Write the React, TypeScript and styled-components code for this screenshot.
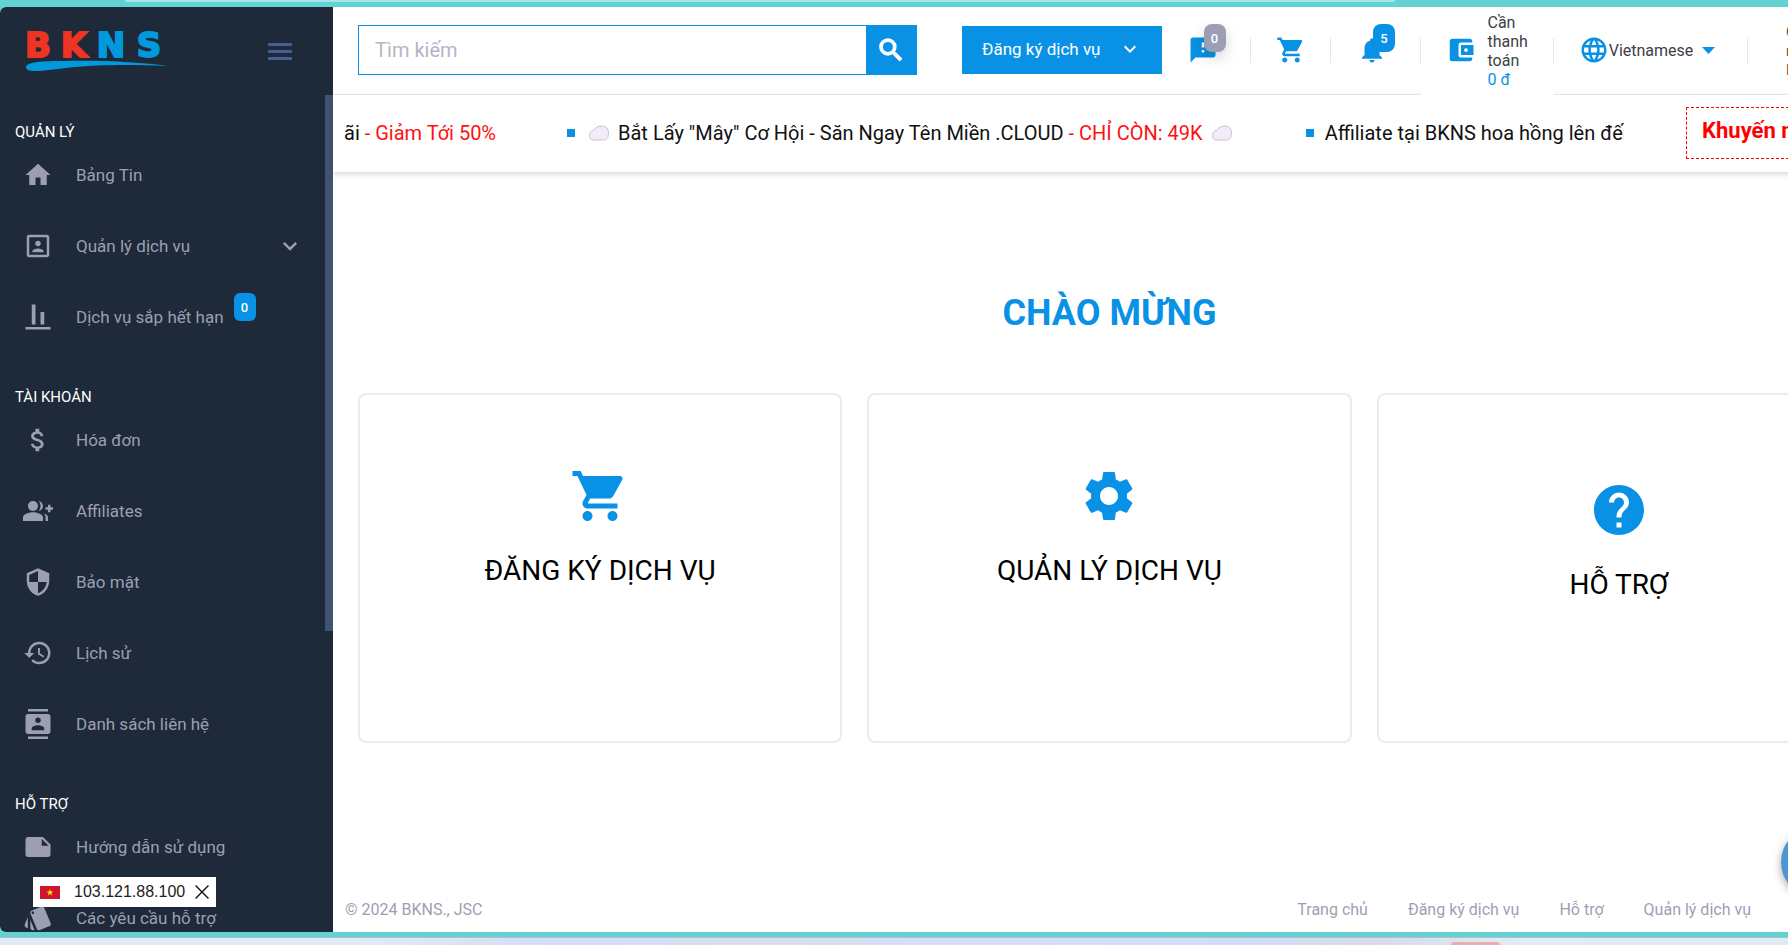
import React from "react";
import styled, { createGlobalStyle, css } from "styled-components";
import {
  MdHome,
  MdPortrait,
  MdAlignVerticalBottom,
  MdAttachMoney,
  MdGroupAdd,
  MdSecurity,
  MdHistory,
  MdContacts,
  MdNote,
  MdStyle,
  MdSearch,
  MdFeedback,
  MdShoppingCart,
  MdNotifications,
  MdAccountBalanceWallet,
  MdLanguage,
  MdSettings,
  MdHelp,
  MdExpandMore,
} from "react-icons/md";

const blue = "#0992e5";
const navy = "#1e2939";
const muted = "#9c9fb4";
const teal = "#62d2d3";
const line = "#ebebf0";

const GlobalStyle = createGlobalStyle`
  * { box-sizing: border-box; }
  body {
    margin: 0;
    overflow: hidden;
    background: ${teal};
    font-family: Roboto, "Liberation Sans", sans-serif;
    color: #212121;
  }
  a { color: inherit; text-decoration: none; }
  button, input, select { font: inherit; }
  h1, h2, p, ul { margin: 0; padding: 0; }
  ul { list-style: none; }
`;

const Desktop = styled.div`
  height: 100vh;
  display: flex;
  flex-direction: column;
  overflow: hidden;
`;

const TopEdge = styled.div`
  flex: none;
  height: 7px;
  padding: 0 22% 0 7%;
  background: ${teal};
  &::before {
    content: "";
    display: block;
    height: 2px;
    border-radius: 0 0 8px 8px;
    background: #a5e8eb;
  }
`;

const BottomEdge = styled.div`
  flex: none;
  height: 13px;
  display: flex;
  align-items: flex-end;
  padding: 0 16% 0 calc(81% + 3px);
  border-top: 5px solid ${teal};
  background: linear-gradient(90deg, #e1ebf5 0%, #e1ebf5 20%, #d3def7 30%, #dadcf2 42%, #d3dff7 60%, #d2def7 70%, #d9daea 77%, #e0ecf6 85%, #e0ebf5 100%);
  box-shadow: inset 0 1px 0 #b4bcc8;
  &::before {
    content: "";
    width: 49px;
    height: 3px;
    border-radius: 4px 4px 0 0;
    background: #ebaead;
  }
`;

/* The application is wider than the window; its right side is cut off. */
const Shell = styled.div`
  flex: 1;
  min-height: 0;
  width: calc(100% + 98px);
  display: flex;
  position: relative;
  overflow: hidden;
  border-radius: 6px 0 0 6px;
  background: #fff;
`;

const Sidebar = styled.aside`
  flex: none;
  width: 333px;
  display: flex;
  flex-direction: column;
  background: ${navy};
`;

const Brand = styled.div`
  flex: none;
  height: 88px;
  display: flex;
  align-items: center;
  justify-content: space-between;
  padding: 0 41px 0 20px;
`;

const MenuButton = styled.button`
  display: grid;
  gap: 4px;
  width: 24px;
  padding: 0;
  border: 0;
  background: none;
  span { height: 3px; background: #455f92; }
`;

const NavScroller = styled.div`
  flex: 1;
  min-height: 0;
  display: flex;
  align-items: flex-start;
`;

const Nav = styled.nav`
  flex: 1;
  height: 100%;
  overflow: hidden;
  section:first-child { margin-top: -7px; }
`;

const ScrollThumb = styled.div`
  flex: none;
  width: 8px;
  height: 64%;
  background: #3f5373;
`;

const SectionTitle = styled.h2`
  padding: 36px 15px 0;
  font-size: 15px;
  line-height: 16px;
  font-weight: 400;
  color: #fff;
`;

const NavItem = styled.a`
  height: 71px;
  display: flex;
  align-items: center;
  padding: 0 21px 2px 23px;
  font-size: 17px;
  color: ${muted};
`;

const NavIcon = styled.span`
  flex: none;
  display: flex;
  margin-right: 23px;
  svg { width: 30px; height: 30px; }
`;

const ExpandMark = styled(MdExpandMore)`
  margin-left: auto;
`;

const Badge = styled.span<{ $tone?: string }>`
  display: grid;
  place-items: center;
  width: 22px;
  height: 28px;
  border-radius: 8px;
  background: ${(p) => p.$tone || blue};
  color: #fff;
  font-size: 13px;
  font-weight: 500;
`;

const NavBadge = styled(Badge)`
  align-self: flex-start;
  margin: 11px 0 0 10px;
  border-radius: 6px;
`;

const Main = styled.div`
  flex: 1;
  min-width: 0;
  display: flex;
  flex-direction: column;
`;

const Header = styled.header`
  flex: none;
  height: 88px;
  display: flex;
  align-items: center;
  padding-left: 25px;
  box-shadow: inset 0 -1px 0 ${line};
`;

const SearchForm = styled.form`
  flex: 1;
  height: 50px;
  display: flex;
  margin: 0 45px 2px 0;
  border: 1px solid ${blue};
  input {
    flex: 1;
    min-width: 0;
    padding: 0 16px;
    border: 0;
    outline: 0;
    font-size: 20px;
    color: #212121;
    &::placeholder { color: #b3b5c6; opacity: 1; }
  }
  button {
    width: 50px;
    display: grid;
    place-items: center;
    padding: 0;
    border: 0;
    background: ${blue};
    color: #fff;
    path:last-child { stroke: #fff; stroke-width: 1px; }
  }
`;

const OrderButton = styled.button`
  width: 200px;
  height: 48px;
  display: flex;
  align-items: center;
  justify-content: space-between;
  margin-bottom: 2px;
  padding: 0 20px 2px;
  border: 0;
  background: ${blue};
  color: #fff;
  font-size: 17px;
  white-space: nowrap;
`;

const Tool = styled.div<{ $width: number; $cover?: boolean; $lean?: "left" | "right" }>`
  position: relative;
  flex: none;
  width: ${(p) => p.$width}px;
  height: 88px;
  display: flex;
  align-items: center;
  justify-content: center;
  padding: 0 ${(p) => (p.$lean === "left" ? 8 : 0)}px 2px ${(p) => (p.$lean === "right" ? 8 : 0)}px;
  background: ${(p) => (p.$cover ? "#fff" : "none")};
  color: ${blue};
  font-size: 16px;
  line-height: 19px;
  &::after {
    content: "";
    position: absolute;
    right: 0;
    width: 1px;
    height: 25px;
    background: #e6e7ec;
  }
  > a { display: flex; }
`;

const IconLink = styled.a`
  position: relative;
`;

const CountBadge = styled(Badge)<{ $raised?: boolean }>`
  position: absolute;
  left: 16px;
  top: -11px;
  box-shadow: ${(p) => (p.$raised ? "0 6px 14px rgba(0, 0, 0, 0.16)" : "none")};
`;

const Balance = styled.a`
  align-items: center;
  gap: 12px;
  p { width: 50px; padding-top: 2px; color: #3c3f46; }
  strong { display: block; font-weight: 400; color: ${blue}; }
`;

const LanguageField = styled.label`
  display: flex;
  align-items: center;
  select {
    appearance: none;
    field-sizing: content;
    padding: 0;
    margin-right: 9px;
    border: 0;
    background: none;
    color: #3c3f46;
  }
`;

const Account = styled.div`
  flex: none;
  width: 138px;
  padding-left: 38px;
  font-size: 15px;
  line-height: 19px;
  color: #6b4326;
`;

const NewsBar = styled.div`
  flex: none;
  height: 77px;
  display: flex;
  align-items: center;
  padding: 0 0 2px 11px;
  box-shadow: 0 2px 6px rgba(0, 0, 0, 0.16);
`;

const Ticker = styled.ul`
  flex: none;
  width: calc(100% - 262px);
  display: flex;
  align-items: center;
  gap: 71px;
  overflow: hidden;
  white-space: nowrap;
  font-size: 20px;
  line-height: 28px;
  color: #111;
`;

const NewsItem = styled.li<{ $bullet?: boolean }>`
  flex: none;
  display: flex;
  align-items: center;
  gap: 6px;
  em { font-style: normal; color: #f11; }
  svg { margin: 0 2px; }
  ${(p) =>
    p.$bullet &&
    css`
      &::before {
        content: "";
        width: 8px;
        height: 8px;
        margin-right: 5px;
        background: ${blue};
      }
    `}
`;

const Promo = styled.a`
  height: 52px;
  margin-left: 62px;
  padding: 0 15px;
  border: 1px dashed #f00;
  color: #f00;
  font-size: 22px;
  line-height: 46px;
  font-weight: 700;
  white-space: nowrap;
`;

const Content = styled.main`
  padding: 119px 25px 0;
`;

const Welcome = styled.h1`
  margin-bottom: 58px;
  font-size: 36px;
  line-height: 44px;
  font-weight: 700;
  text-align: center;
  color: ${blue};
`;

const Cards = styled.div`
  display: grid;
  grid-template-columns: repeat(3, 1fr);
  gap: 25px;
`;

const Card = styled.a<{ $low?: boolean }>`
  height: 350px;
  display: flex;
  flex-direction: column;
  align-items: center;
  gap: 25px;
  padding-top: ${(p) => (p.$low ? 85 : 71)}px;
  border: 2px solid ${line};
  border-radius: 8px;
  font-size: 28px;
  line-height: 40px;
  color: #000;
  svg { width: 60px; height: 60px; color: ${blue}; }
`;

const Footer = styled.footer`
  display: flex;
  justify-content: space-between;
  margin-top: auto;
  padding: 0 135px 12px 12px;
  font-size: 16px;
  line-height: 20px;
  color: ${muted};
  nav { display: flex; gap: 40px; }
`;

const ChatButton = styled.button`
  position: absolute;
  right: 35px;
  bottom: 35px;
  width: 70px;
  height: 70px;
  border: 0;
  border-radius: 50%;
  background: #4f95d5;
  box-shadow: 0 3px 8px rgba(0, 0, 0, 0.35);
`;

const IpNotice = styled.div`
  position: absolute;
  left: 33px;
  bottom: 25px;
  height: 30px;
  display: flex;
  align-items: center;
  padding: 0 7px;
  background: #fff;
  color: #222;
  font-family: "Liberation Sans", Arial, sans-serif;
  font-size: 16px;
  span { margin: 0 10px 0 14px; }
  button { display: flex; padding: 0; border: 0; background: none; }
`;

const Logo = () => (
  <svg width="150" height="48" viewBox="0 0 150 48" role="img" aria-label="BKNS">
    <g
      fontFamily="DejaVu Sans, sans-serif"
      fontWeight="700"
      fontSize="34"
      textAnchor="middle"
      strokeWidth="2"
    >
      <g fill="#ee3524" stroke="#ee3524">
        <text x="18" y="30">B</text>
        <text x="54" y="30">K</text>
      </g>
      <g fill="#0099dc" stroke="#0099dc">
        <text x="91" y="30">N</text>
        <text x="129" y="30">S</text>
      </g>
    </g>
    <path
      d="M6 40C7 35 21 34 42 34c40-1 78 1 106 5-40-2-72-1-94 1-18 2-30 4-39 4-6 0-9-1-9-4Z"
      fill="#0099dc"
    />
  </svg>
);

const Cloud = () => (
  <svg width="22" height="16" viewBox="0 0 21 16" aria-hidden="true">
    <path
      d="M5 5.500C7 3 9 1 13.500 1 18 1 20 4 20 8c0 5-2 7-5 7H4C2 15 1 13 1 10.500 1 7.500 3 5.500 5 5.500Z"
      fill="#f2ecf9"
      stroke="#c9c1d1"
    />
  </svg>
);

const VietnamFlag = () => (
  <svg width="20" height="13" viewBox="0 0 20 13" aria-hidden="true">
    <path d="M0 0h20v13H0z" fill="#d0142c" />
    <path d="m10 2.800.9 2.600h2.700l-2.200 1.600.8 2.600L10 8l-2.200 1.600.8-2.600-2.200-1.600h2.700z" fill="#ffdc00" />
  </svg>
);

type NavEntry = {
  icon: React.ComponentType;
  label: string;
  expandable?: boolean;
  count?: number;
};

const sections: { title: string; items: NavEntry[] }[] = [
  {
    title: "QUẢN LÝ",
    items: [
      { icon: MdHome, label: "Bảng Tin" },
      { icon: MdPortrait, label: "Quản lý dịch vụ", expandable: true },
      { icon: MdAlignVerticalBottom, label: "Dịch vụ sắp hết hạn", count: 0 },
    ],
  },
  {
    title: "TÀI KHOẢN",
    items: [
      { icon: MdAttachMoney, label: "Hóa đơn" },
      { icon: MdGroupAdd, label: "Affiliates" },
      { icon: MdSecurity, label: "Bảo mật" },
      { icon: MdHistory, label: "Lịch sử" },
      { icon: MdContacts, label: "Danh sách liên hệ" },
    ],
  },
  {
    title: "HỖ TRỢ",
    items: [
      { icon: MdNote, label: "Hướng dẫn sử dụng" },
      { icon: MdStyle, label: "Các yêu cầu hỗ trợ" },
    ],
  },
];

export default function App() {
  return (
    <Desktop>
      <GlobalStyle />
      <TopEdge />
      <Shell>
        <Sidebar>
          <Brand>
            <Logo />
            <MenuButton aria-label="Menu">
              <span />
              <span />
              <span />
            </MenuButton>
          </Brand>
          <NavScroller>
            <Nav>
              {sections.map((section) => (
                <section key={section.title}>
                  <SectionTitle>{section.title}</SectionTitle>
                  {section.items.map(({ icon: Icon, label, expandable, count }) => (
                    <NavItem href="#" key={label}>
                      <NavIcon>
                        <Icon />
                      </NavIcon>
                      {label}
                      {count !== undefined && <NavBadge>{count}</NavBadge>}
                      {expandable && <ExpandMark size={28} />}
                    </NavItem>
                  ))}
                </section>
              ))}
            </Nav>
            <ScrollThumb />
          </NavScroller>
        </Sidebar>

        <Main>
          <Header>
            <SearchForm>
              <input type="text" placeholder="Tìm kiếm" aria-label="Tìm kiếm" />
              <button type="button" aria-label="Tìm kiếm">
                <MdSearch size={30} />
              </button>
            </SearchForm>
            <OrderButton>
              Đăng ký dịch vụ
              <MdExpandMore size={24} />
            </OrderButton>
            <Tool $width={89} $lean="left">
              <IconLink href="#" aria-label="Tin nhắn">
                <MdFeedback size={30} />
                <CountBadge $tone={muted} $raised>
                  0
                </CountBadge>
              </IconLink>
            </Tool>
            <Tool $width={80}>
              <IconLink href="#" aria-label="Giỏ hàng">
                <MdShoppingCart size={30} />
              </IconLink>
            </Tool>
            <Tool $width={90} $lean="left">
              <IconLink href="#" aria-label="Thông báo">
                <MdNotifications size={30} />
                <CountBadge>5</CountBadge>
              </IconLink>
            </Tool>
            <Tool $width={133} $cover $lean="right">
              <Balance href="#">
                <MdAccountBalanceWallet size={30} />
                <p>
                  Cần thanh toán
                  <strong>0 đ</strong>
                </p>
              </Balance>
            </Tool>
            <Tool $width={194} $lean="left">
              <LanguageField>
                <MdLanguage size={30} aria-hidden="true" />
                <select aria-label="Ngôn ngữ">
                  <option>Vietnamese</option>
                </select>
                <svg width="13" height="7" viewBox="0 0 13 7" aria-hidden="true">
                  <path d="M0 0h13L6.500 7z" fill={blue} />
                </svg>
              </LanguageField>
            </Tool>
            <Account>
              C<br />n<br />H
            </Account>
          </Header>

          <NewsBar>
            <Ticker>
              <NewsItem>
                <span>
                  ãi <em>- Giảm Tới 50%</em>
                </span>
              </NewsItem>
              <NewsItem $bullet>
                <Cloud />
                <span>
                  Bắt Lấy "Mây" Cơ Hội - Săn Ngay Tên Miền .CLOUD <em>- CHỈ CÒN: 49K</em>
                </span>
                <Cloud />
              </NewsItem>
              <NewsItem $bullet>
                <span>Affiliate tại BKNS hoa hồng lên đến</span>
              </NewsItem>
            </Ticker>
            <Promo href="#">Khuyến mãi</Promo>
          </NewsBar>

          <Content>
            <Welcome>CHÀO MỪNG</Welcome>
            <Cards>
              <Card href="#">
                <MdShoppingCart />
                ĐĂNG KÝ DỊCH VỤ
              </Card>
              <Card href="#">
                <MdSettings />
                QUẢN LÝ DỊCH VỤ
              </Card>
              <Card href="#" $low>
                <MdHelp />
                HỖ TRỢ
              </Card>
            </Cards>
          </Content>

          <Footer>
            <span>© 2024 BKNS., JSC</span>
            <nav>
              <a href="#">Trang chủ</a>
              <a href="#">Đăng ký dịch vụ</a>
              <a href="#">Hỗ trợ</a>
              <a href="#">Quản lý dịch vụ</a>
            </nav>
          </Footer>
        </Main>

        <IpNotice>
          <VietnamFlag />
          <span>103.121.88.100</span>
          <button aria-label="Đóng">
            <svg width="14" height="14" viewBox="0 0 13 13" aria-hidden="true">
              <path d="m.5.5 12 12m0-12-12 12" stroke="#111" strokeWidth="1.300" />
            </svg>
          </button>
        </IpNotice>
        <ChatButton aria-label="Trò chuyện" />
      </Shell>
      <BottomEdge />
    </Desktop>
  );
}
